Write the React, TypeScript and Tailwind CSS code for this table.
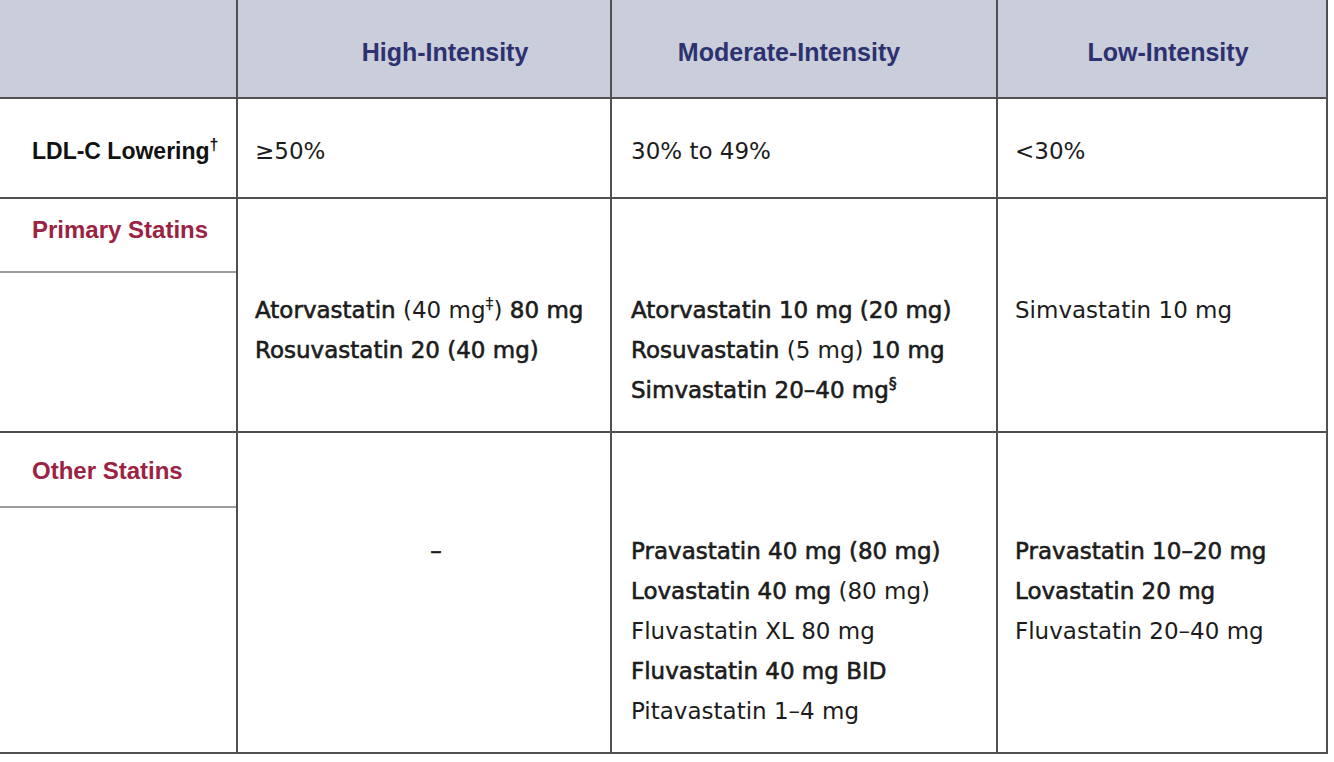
import type { ReactNode } from 'react'

const body = "font-['DejaVu_Sans',sans-serif] text-[23px] leading-[40px] text-[#1c1c1c]"
const label = "font-['Liberation_Sans',Arial,sans-serif] font-bold text-[23px]"

function B({ children }: { children: ReactNode }) {
  return <span className="[-webkit-text-stroke:0.6px_currentColor]">{children}</span>
}

function Sup({ children }: { children: ReactNode }) {
  return <sup className="text-[16px] -top-[9px]">{children}</sup>
}

export default function App() {
  return (
    <div className="w-[1334px] h-[762px] bg-white overflow-hidden">
      <div className="w-[1328px]">
        {/* Header */}
        <div className="flex h-[99px] bg-[#cacdda] border-b-2 border-[#505050] border-r-2">
          <div className="w-[238px] border-r-2 border-[#505050]" />
          <div className="w-[374px] border-r-2 border-[#505050] flex items-center justify-center pl-[42px] pt-[9px]">
            <span className={`${label} text-[25px] text-[#2c3170]`}>High-Intensity</span>
          </div>
          <div className="w-[386px] border-r-2 border-[#505050] flex items-center justify-center pr-[30px] pt-[9px]">
            <span className={`${label} text-[25px] text-[#2c3170]`}>Moderate-Intensity</span>
          </div>
          <div className="flex-1 flex items-center justify-center pl-[12px] pt-[9px]">
            <span className={`${label} text-[25px] text-[#2c3170]`}>Low-Intensity</span>
          </div>
        </div>

        {/* LDL-C lowering */}
        <div className={`flex h-[100px] border-b-2 border-r-2 border-[#505050] ${body}`}>
          <div className="w-[238px] border-r-2 border-[#505050] flex items-center pl-[32px] pt-[6px]">
            <span className={`${label} text-[#111]`}>
              LDL-C Lowering<Sup>†</Sup>
            </span>
          </div>
          <div className="w-[374px] border-r-2 border-[#505050] flex items-center pl-[17px] pt-[6px]">≥50%</div>
          <div className="w-[386px] border-r-2 border-[#505050] flex items-center pl-[19px] pt-[6px]">30% to 49%</div>
          <div className="flex-1 flex items-center pl-[17px] pt-[6px]">&lt;30%</div>
        </div>

        {/* Primary statins */}
        <div className={`flex h-[234px] border-b-2 border-r-2 border-[#505050] ${body}`}>
          <div className="w-[238px] border-r-2 border-[#505050] flex flex-col">
            <div className="h-[74px] border-b-2 border-[#9c9c9c] flex items-center pl-[32px] pb-[10px]">
              <span className={`${label} text-[24px] text-[#9b2243]`}>Primary Statins</span>
            </div>
          </div>
          <div className="w-[374px] border-r-2 border-[#505050] pl-[17px] pt-[91px]">
            <div>
              <B>Atorvastatin</B> (40 mg<Sup>‡</Sup>) <B>80 mg</B>
            </div>
            <div>
              <B>Rosuvastatin 20 (40 mg)</B>
            </div>
          </div>
          <div className="w-[386px] border-r-2 border-[#505050] pl-[19px] pt-[91px]">
            <div>
              <B>Atorvastatin 10 mg (20 mg)</B>
            </div>
            <div>
              <B>Rosuvastatin</B> (5 mg) <B>10 mg</B>
            </div>
            <div>
              <B>
                Simvastatin 20–40 mg<Sup>§</Sup>
              </B>
            </div>
          </div>
          <div className="flex-1 pl-[17px] pt-[91px]">
            <div>Simvastatin 10 mg</div>
          </div>
        </div>

        {/* Other statins */}
        <div className={`flex h-[321px] border-b-2 border-r-2 border-[#505050] ${body}`}>
          <div className="w-[238px] border-r-2 border-[#505050] flex flex-col">
            <div className="h-[75px] border-b-2 border-[#9c9c9c] flex items-center pl-[32px] pt-[2px]">
              <span className={`${label} text-[24px] text-[#9b2243]`}>Other Statins</span>
            </div>
          </div>
          <div className="w-[374px] border-r-2 border-[#505050] pt-[98px] text-center pl-[24px]">
            <B>–</B>
          </div>
          <div className="w-[386px] border-r-2 border-[#505050] pl-[19px] pt-[98px]">
            <div>
              <B>Pravastatin 40 mg (80 mg)</B>
            </div>
            <div>
              <B>Lovastatin 40 mg</B> (80 mg)
            </div>
            <div>Fluvastatin XL 80 mg</div>
            <div>
              <B>Fluvastatin 40 mg BID</B>
            </div>
            <div>Pitavastatin 1–4 mg</div>
          </div>
          <div className="flex-1 pl-[17px] pt-[98px]">
            <div>
              <B>Pravastatin 10–20 mg</B>
            </div>
            <div>
              <B>Lovastatin 20 mg</B>
            </div>
            <div>Fluvastatin 20–40 mg</div>
          </div>
        </div>
      </div>
    </div>
  )
}
